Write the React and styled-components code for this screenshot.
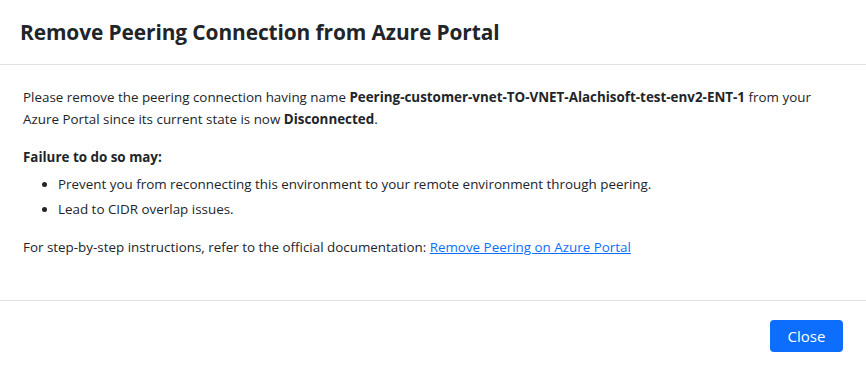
import React from 'react'
import styled, { createGlobalStyle } from 'styled-components'

const GlobalStyle = createGlobalStyle`
  html, body {
    margin: 0;
    padding: 0;
    background: #fff;
  }
  body {
    font-family: "Open Sans", "Noto Sans", sans-serif;
    color: #212529;
  }
`

const Modal = styled.div`
  width: 866px;
  height: 371px;
  display: flex;
  flex-direction: column;
  background: #fff;
`

const Header = styled.div`
  height: 65px;
  display: flex;
  align-items: center;
  padding: 0 20px;
  border-bottom: 1px solid #dee2e6;
  box-sizing: border-box;
`

const Title = styled.h5`
  margin: 0;
  font-size: 20.9px;
  font-weight: 700;
  color: #212529;
  letter-spacing: -0.1px;
`

const Body = styled.div`
  flex: 1;
  padding: 21px 30px 0 23px;
  font-size: 13.4px;
  line-height: 22px;
  border-bottom: 1px solid #dee2e6;
`

const Para = styled.p`
  margin: 0 0 16px;
`

const Heading = styled.p`
  margin: 0 0 5px;
  font-weight: 700;
`

const List = styled.ul`
  margin: 0 0 16px;
  padding-left: 35px;
`

const Item = styled.li`
  margin-bottom: 3px;
`

const Link = styled.a`
  color: #0d6efd;
  text-decoration: underline;
`

const Footer = styled.div`
  height: 70px;
  display: flex;
  align-items: center;
  justify-content: flex-end;
  padding: 0 23px;
  box-sizing: border-box;
`

const Button = styled.button`
  width: 73px;
  height: 32px;
  border: none;
  border-radius: 4px;
  background: #0d6efd;
  color: #fff;
  font-family: inherit;
  font-size: 15px;
  cursor: pointer;
`

const App = () => (
  <Modal>
    <GlobalStyle />
    <Header>
      <Title>Remove Peering Connection from Azure Portal</Title>
    </Header>
    <Body>
      <Para>
        Please remove the peering connection having name <b>Peering-customer-vnet-TO-VNET-Alachisoft-test-env2-ENT-1</b> from your
        Azure Portal since its current state is now <b>Disconnected</b>.
      </Para>
      <Heading>Failure to do so may:</Heading>
      <List>
        <Item>Prevent you from reconnecting this environment to your remote environment through peering.</Item>
        <Item>Lead to CIDR overlap issues.</Item>
      </List>
      <Para>
        For step-by-step instructions, refer to the official documentation: <Link href="#">Remove Peering on Azure Portal</Link>
      </Para>
    </Body>
    <Footer>
      <Button>Close</Button>
    </Footer>
  </Modal>
)

export default App
